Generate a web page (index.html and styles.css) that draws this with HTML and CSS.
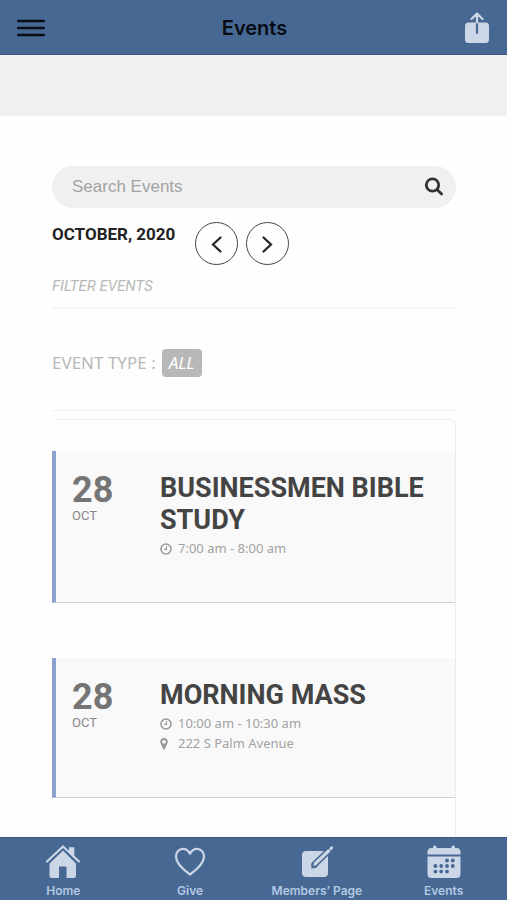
FILE: index.html
```html
<!DOCTYPE html>
<html lang="en">
<head>
<meta charset="utf-8">
<meta name="viewport" content="width=device-width, initial-scale=1">
<title>Events</title>
<link rel="stylesheet" href="styles.css">
</head>
<body>
<header class="topbar">
  <button class="icon-button" type="button" aria-label="Menu">
    <svg width="28" height="18" viewBox="0 0 28 18" fill="none" stroke="#0a0f16" stroke-width="2.5" stroke-linecap="round"><path d="M1.2 2h25.6M1.2 9h25.6M1.2 16h25.6"/></svg>
  </button>
  <h1 class="topbar-title">Events</h1>
  <button class="icon-button" type="button" aria-label="Share">
    <svg width="26" height="32" viewBox="0 0 26 32" fill="none" stroke-linecap="round" stroke-linejoin="round">
      <rect x="1" y="10.500" width="24" height="20.500" rx="3.500" fill="#cbd6e6"/>
      <path d="M13 10v11" stroke="#466892" stroke-width="2.200"/>
      <path d="M13 10.500V2M7.500 7L13 1.500 18.500 7" stroke="#cbd6e6" stroke-width="2.200"/>
    </svg>
  </button>
</header>

<main class="page">
  <div class="banner"></div>
  <div class="content">
    <form class="search">
      <input class="search-input" type="text" placeholder="Search Events" aria-label="Search Events">
      <button class="icon-button" type="button" aria-label="Search">
        <svg width="20" height="20" viewBox="0 0 20 20" fill="none" stroke="#333" stroke-width="2.800"><circle cx="8.500" cy="8" r="6.200"/><path d="M13.200 12.700l4.400 4.400" stroke-linecap="round"/></svg>
      </button>
    </form>

    <div class="month">
      <h2 class="month-name">OCTOBER, 2020</h2>
      <div class="month-nav">
        <button class="round-button" type="button" aria-label="Previous month">
          <svg width="12" height="18" viewBox="0 0 12 18" fill="none" stroke="#222" stroke-width="2.200" stroke-linecap="round"><path d="M9.500 2.500L2 9.500l7.500 7"/></svg>
        </button>
        <button class="round-button" type="button" aria-label="Next month">
          <svg width="12" height="18" viewBox="0 0 12 18" fill="none" stroke="#222" stroke-width="2.200" stroke-linecap="round"><path d="M1.500 2.500l7.500 7-7.500 7"/></svg>
        </button>
      </div>
    </div>

    <p class="filter-title">FILTER EVENTS</p>
    <div class="filter">
      <span>EVENT TYPE :</span>
      <button class="filter-value" type="button">ALL</button>
    </div>

    <section class="events">
      <article class="event">
        <div class="date"><span class="day">28</span><span class="mon">OCT</span></div>
        <div class="details">
          <h3 class="event-title">BUSINESSMEN BIBLE STUDY</h3>
          <p class="meta">
            <svg width="12" height="14" viewBox="0 0 12 14" fill="none" stroke="#999"><circle cx="6" cy="8" r="5" stroke-width="1.600"/><path d="M6.500 5v3.400H4" stroke-width="1.100"/></svg>
            7:00 am - 8:00 am
          </p>
        </div>
      </article>
      <article class="event">
        <div class="date"><span class="day">28</span><span class="mon">OCT</span></div>
        <div class="details">
          <h3 class="event-title">MORNING MASS</h3>
          <p class="meta">
            <svg width="12" height="14" viewBox="0 0 12 14" fill="none" stroke="#999"><circle cx="6" cy="8" r="5" stroke-width="1.600"/><path d="M6.500 5v3.400H4" stroke-width="1.100"/></svg>
            10:00 am - 10:30 am
          </p>
          <p class="meta">
            <svg width="12" height="14" viewBox="0 0 12 14" fill="#999" fill-rule="evenodd"><path d="M4 2C1.800 2 .2 3.600.2 5.800c0 .8.200 1.300.5 1.900l2.600 5.600c.3.600 1.100.6 1.400 0l2.600-5.600c.3-.6.500-1.100.5-1.900C7.800 3.600 6.200 2 4 2zm0 5.700a1.900 1.900 0 1 1 0-3.800 1.900 1.900 0 0 1 0 3.800z"/></svg>
            222 S Palm Avenue
          </p>
        </div>
      </article>
    </section>
  </div>
</main>

<nav class="tabs" aria-label="Main">
  <a class="tab" href="#home">
    <svg width="36" height="36" viewBox="0 0 36 36" fill="#cbd6e6">
      <path d="M18 6.500L4.500 19.500V32q0 2 2 2H14V22.500h7.500V34H29q2 0 2-2V19.500z"/>
      <path d="M1.500 18.500L18 2.500l16.500 16" fill="none" stroke="#466892" stroke-width="5"/>
      <path d="M2 17.500L18 2.500l16 15" fill="none" stroke="#cbd6e6" stroke-width="2.200" stroke-linecap="round" stroke-linejoin="round"/>
      <path d="M24 3.200h5.300v10.300L24 8.500z"/>
    </svg>
    <span>Home</span>
  </a>
  <a class="tab" href="#give">
    <svg width="36" height="36" viewBox="0 0 36 36" fill="none" stroke="#cbd6e6" stroke-width="2.200" stroke-linejoin="round"><path d="M18 30.500C11 25.500 4 19 4 12.500 4 8 7 4.800 11 4.800c3.200 0 5.600 2 7 4.900 1.400-2.900 3.800-4.900 7-4.900 4 0 7 3.200 7 7.700 0 6.500-7 13-14 18z"/></svg>
    <span>Give</span>
  </a>
  <a class="tab" href="#members">
    <svg width="36" height="36" viewBox="0 0 36 36" stroke-linecap="round">
      <rect x="3" y="7" width="26" height="26" rx="4" fill="#cbd6e6"/>
      <path d="M15.500 20.500L30 6.500" stroke="#466892" stroke-width="6.500"/>
      <path d="M12.800 23.700l1.200-5 3.800 3.800z" fill="#466892" stroke="#466892"/>
      <path d="M16.500 19.500L29.500 7" stroke="#cbd6e6" stroke-width="3.200"/>
      <path d="M31.800 4.700l.8-.8" stroke="#cbd6e6" stroke-width="3"/>
      <path d="M14 22l1.200-3.200 2.200 2.200z" fill="#cbd6e6"/>
    </svg>
    <span>Members’ Page</span>
  </a>
  <a class="tab" href="#events">
    <svg width="36" height="36" viewBox="0 0 36 36" fill="#cbd6e6">
      <rect x="7" y="1.500" width="3.500" height="6" rx="1.500"/><rect x="25.500" y="1.500" width="3.500" height="6" rx="1.500"/>
      <path d="M1.500 10.500V8q0-4 4-4h25q4 0 4 4v2.500z"/>
      <path d="M1.500 12.500h33V30q0 4-4 4h-25q-4 0-4-4z"/>
      <g fill="#466892"><circle cx="21" cy="16.500" r="1.900"/><circle cx="26.800" cy="16.500" r="1.900"/><circle cx="9.400" cy="22" r="1.900"/><circle cx="15.200" cy="22" r="1.900"/><circle cx="21" cy="22" r="1.900"/><circle cx="26.800" cy="22" r="1.900"/><circle cx="9.400" cy="27.600" r="1.900"/><circle cx="15.200" cy="27.600" r="1.900"/><circle cx="21" cy="27.600" r="1.900"/></g>
    </svg>
    <span>Events</span>
  </a>
</nav>
</body>
</html>
```
FILE: styles.css
```css
* {
  box-sizing: border-box;
}

body {
  margin: 0;
  height: 100vh;
  display: flex;
  flex-direction: column;
  background: #fefefe;
  font-family: Roboto, sans-serif;
}

h1, h2, h3, p {
  margin: 0;
}

button {
  border: 0;
  padding: 0;
  background: none;
  font: inherit;
  color: inherit;
}

svg {
  display: block;
}

.topbar {
  flex: none;
  display: flex;
  align-items: center;
  justify-content: space-between;
  padding: 12px 17px 10px;
  background: #466892;
  border-bottom: 1px solid #415f85;
}

.topbar-title {
  font: 600 20px/32px Inter, sans-serif;
  color: #070c14;
}

.page {
  flex: 1;
  min-height: 0;
  overflow: hidden;
}

.banner {
  height: 61px;
  background: #f0f0f0;
}

.content {
  padding: 50px 51px 0 52px;
}

.search {
  display: flex;
  align-items: center;
  height: 42px;
  padding: 0 12px 0 20px;
  border-radius: 21px;
  background: #f0f0f0;
}

.search-input {
  flex: 1;
  min-width: 0;
  padding: 0;
  border: 0;
  outline: 0;
  background: none;
  font: 17px/24px "Liberation Sans", sans-serif;
  color: #333;
}

.search-input::placeholder {
  color: #a3a3a3;
  opacity: 1;
}

.month {
  display: flex;
  gap: 20px;
  margin-top: 14px;
}

.month-name {
  font-size: 17px;
  line-height: 24px;
  font-weight: 700;
  color: #222;
}

.month-nav {
  display: flex;
  gap: 8px;
}

.round-button {
  display: grid;
  place-items: center;
  width: 43px;
  height: 43px;
  border: 1px solid #444;
  border-radius: 50%;
}

.filter-title {
  padding: 11px 0;
  border-bottom: 2px solid #f5f5f5;
  font-size: 15px;
  line-height: 20px;
  font-style: italic;
  color: #b8b8b8;
}

.filter {
  display: flex;
  align-items: center;
  gap: 6px;
  padding: 40px 0 33px;
  border-bottom: 1px solid #f0f0f0;
  font: 17px/28px "Noto Sans", sans-serif;
  color: #b8b8b8;
}

.filter-value {
  padding: 0 7px;
  border-radius: 4px;
  background: #b8b8b8;
  font-style: italic;
  color: #fff;
}

.events {
  display: grid;
  gap: 55px;
  margin-top: 8px;
  padding: 31px 0 55px;
  border: solid #ececec;
  border-width: 1px 1px 0 0;
  border-radius: 6px 6px 0 0;
}

.event {
  display: grid;
  grid-template-columns: 88px 1fr;
  padding: 21px 16px 44px;
  border-left: 4px solid #8ba2cf;
  border-bottom: 1px solid #d2d2d2;
  background: #f9f9f9;
}

.date {
  display: flex;
  flex-direction: column;
  color: #757575;
}

.day {
  font-size: 36px;
  line-height: 36px;
  font-weight: 700;
}

.mon {
  font-size: 13px;
  line-height: 16px;
  color: #888;
}

.event-title {
  margin-bottom: 2px;
  font-size: 27px;
  line-height: 32px;
  font-weight: 700;
  color: #444;
}

.meta {
  display: flex;
  align-items: center;
  gap: 6px;
  font: 13px/20px "Noto Sans", sans-serif;
  color: #a3a3a3;
}

.tabs {
  flex: none;
  display: grid;
  grid-template-columns: repeat(4, 1fr);
  padding: 6px 0 1px;
  background: #466892;
  border-top: 1px solid #3b5a82;
}

.tab {
  display: flex;
  flex-direction: column;
  align-items: center;
  gap: 3px;
  font: 600 12px/16px Inter, sans-serif;
  color: #b4c9e4;
  text-decoration: none;
}
```
